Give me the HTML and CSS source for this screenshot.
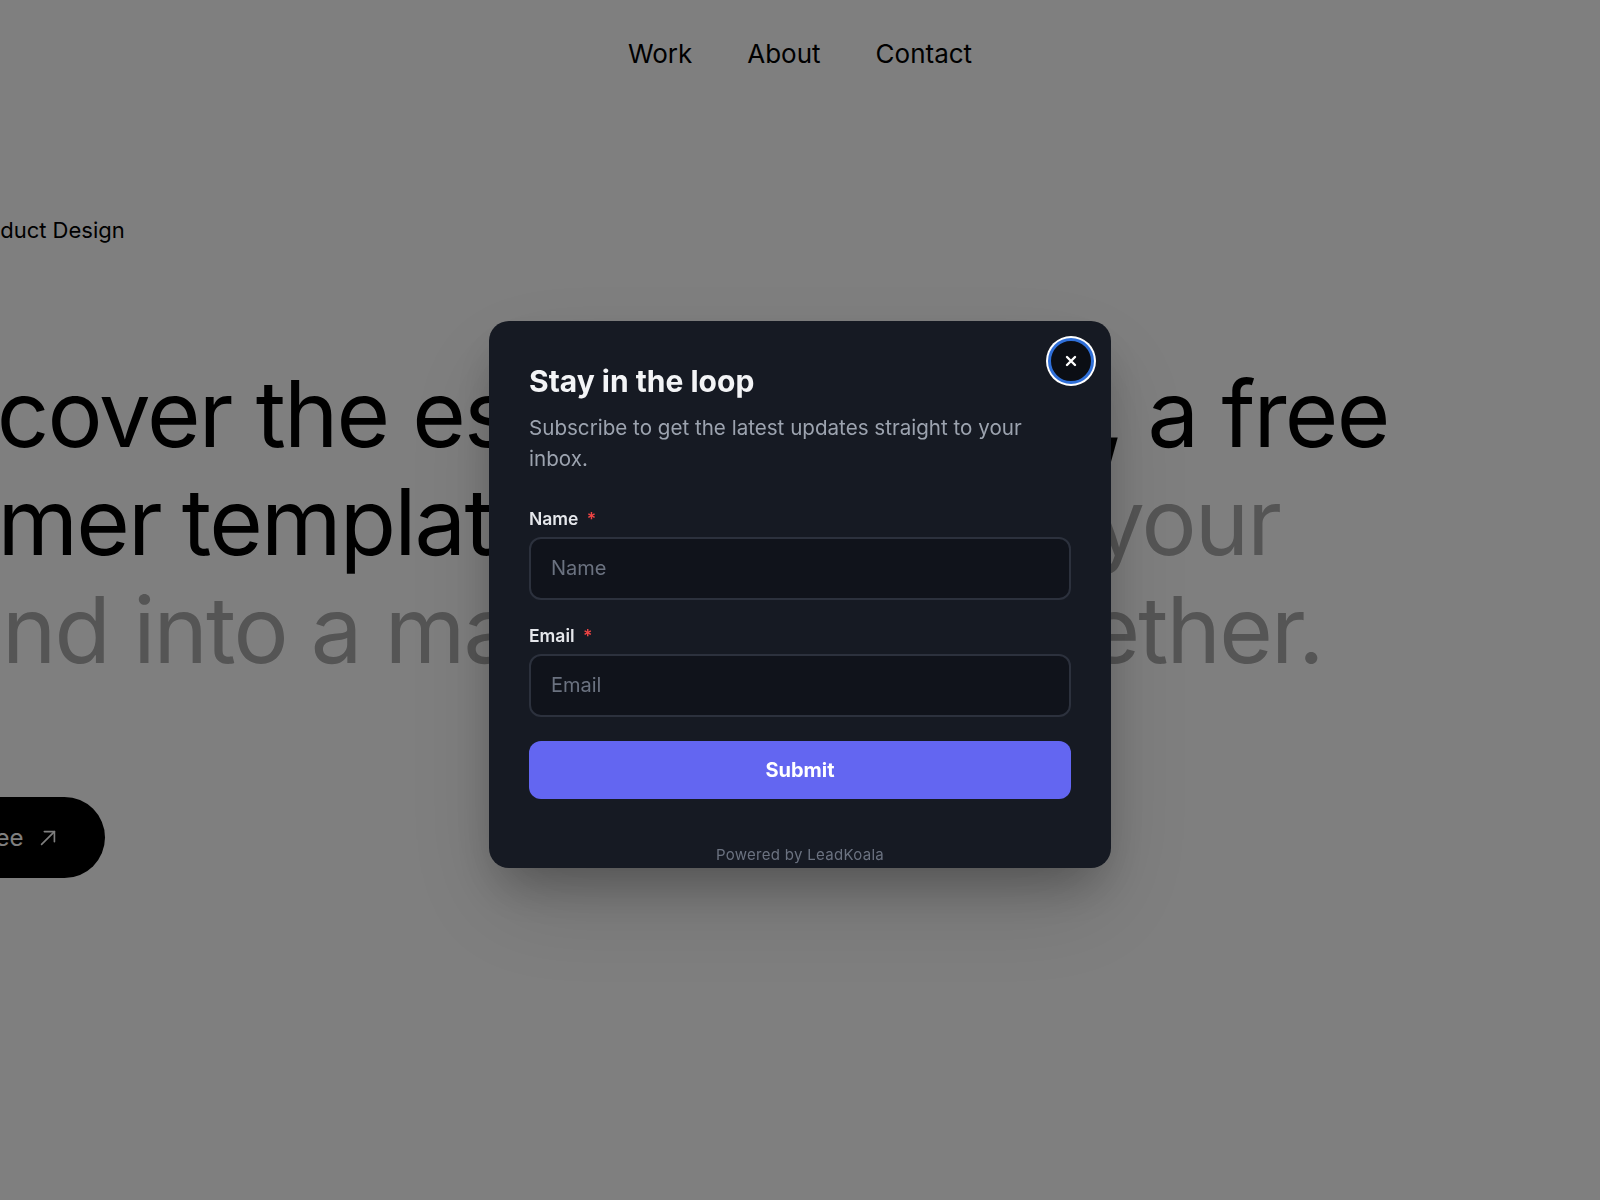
FILE: index.html
```html
<!DOCTYPE html>
<html lang="en">
<head>
    <meta charset="UTF-8">
    <title>Luxe — Framer Template</title>
    <link rel="stylesheet" href="styles.css">
</head>
<body>
<div class="page">
    <nav class="top-nav">
        <a href="#">Work</a>
        <a href="#">About</a>
        <a href="#">Contact</a>
    </nav>

    <section class="hero">
        <p class="hero-tag">Product Design</p>
        <h1 class="hero-title">
            <span class="line">Discover the essence of Luxe, a free</span>
            <span class="line tight">Framer template to transform <span class="dim">your</span></span>
            <span class="line dim">brand into a masterpiece, together.</span>
        </h1>
        <a class="hero-cta" href="#">
            Get it free
            <svg width="22" height="22" viewBox="0 0 24 24" fill="none" stroke="currentColor" stroke-width="1.8" stroke-linecap="round" stroke-linejoin="round">
                <path d="M5 19L19 5"/>
                <path d="M8 5h11v11"/>
            </svg>
        </a>
    </section>
</div>

<!-- Newsletter popup -->
<div class="overlay">
    <div class="popup">
        <button class="close-btn" type="button" aria-label="Close">
            <svg width="12" height="12" viewBox="0 0 12 12" fill="none" stroke="#fff" stroke-width="2.4" stroke-linecap="round">
                <path d="M2 2l8 8M10 2l-8 8"/>
            </svg>
        </button>

        <h2 class="popup-title">Stay in the loop</h2>
        <p class="popup-sub">Subscribe to get the latest updates straight to your inbox.</p>

        <form class="popup-form" onsubmit="return false;">
            <div class="field">
                <label for="leadName">Name <span class="req">*</span></label>
                <input type="text" id="leadName" placeholder="Name">
            </div>
            <div class="field">
                <label for="leadEmail">Email <span class="req">*</span></label>
                <input type="email" id="leadEmail" placeholder="Email">
            </div>
            <button class="submit-btn" type="submit">Submit</button>
        </form>

        <p class="powered">Powered by LeadKoala</p>
    </div>
</div>
</body>
</html>
```

FILE: styles.css
```css
* {
    box-sizing: border-box;
}
body {
    margin: 0;
    background-color: #fff;
    color: #000;
    font-family: 'Inter', 'Liberation Sans', sans-serif;
    overflow: hidden;
}
.page {
    height: 1200px;
}

/* Top navigation */
.top-nav {
    display: flex;
    justify-content: center;
    gap: 55px;
    padding-top: 39px;
}
.top-nav a {
    color: #000;
    text-decoration: none;
    font-size: 26px;
    line-height: 30px;
}

/* Hero */
.hero {
    margin-left: -135px;
}
.hero-tag {
    margin: 148px 0 0 100px;
    font-size: 22px;
    line-height: 26px;
}
.hero-title {
    margin: 117px 0 0;
    font-size: 92px;
    font-weight: 400;
    line-height: 108px;
    letter-spacing: -0.02em;
}
.hero-title .line {
    display: block;
    white-space: nowrap;
}
.hero-title .tight {
    word-spacing: -3px;
}
.dim {
    color: #aaa;
}
.hero-cta {
    display: inline-flex;
    align-items: center;
    gap: 14px;
    height: 81px;
    margin-top: 113px;
    padding: 0 46px;
    border-radius: 41px;
    background-color: #000;
    color: #fff;
    font-size: 24px;
    text-decoration: none;
}

/* Popup */
.overlay {
    position: fixed;
    inset: 0;
    display: flex;
    align-items: center;
    justify-content: center;
    padding-bottom: 12px;
    background-color: rgba(0,0,0,0.5);
}
.popup {
    position: relative;
    width: 622px;
    padding: 42px 40px 3px;
    background-color: #161a23;
    border-radius: 20px;
    box-shadow: 0 25px 50px -12px rgba(0,0,0,0.3), 0 40px 100px rgba(0,0,0,0.12);
}
.close-btn {
    position: absolute;
    top: 17px;
    right: 17px;
    width: 46px;
    height: 46px;
    display: flex;
    align-items: center;
    justify-content: center;
    padding: 0;
    background-color: #0b0e14;
    border: 3px solid #2f6fd8;
    border-radius: 50%;
    box-shadow: 0 0 0 2px #fff;
    cursor: pointer;
}
.popup-title {
    margin: 0;
    color: #f3f4f6;
    font-size: 30px;
    line-height: 36px;
    font-weight: 700;
}
.popup-sub {
    margin: 13px 0 0;
    color: #9ca3af;
    font-size: 20.6px;
    line-height: 31px;
}
.popup-form {
    margin-top: 33px;
}
.field {
    margin-bottom: 24px;
}
.field label {
    display: block;
    margin-bottom: 6px;
    color: #e5e7eb;
    font-size: 17.5px;
    line-height: 24px;
    font-weight: 600;
}
.req {
    color: #ef4444;
    margin-left: 4px;
}
.field input {
    display: block;
    width: 100%;
    height: 63px;
    padding: 0 20px;
    background-color: #10131b;
    border: 2px solid #2c313d;
    border-radius: 12px;
    color: #f3f4f6;
    font-family: inherit;
    font-size: 20px;
    outline: none;
}
.field input::placeholder {
    color: #6b7280;
}
.submit-btn {
    display: block;
    width: 100%;
    height: 58px;
    background-color: #6366f1;
    border: none;
    border-radius: 12px;
    color: #fff;
    font-family: inherit;
    font-size: 20px;
    font-weight: 700;
    cursor: pointer;
}
.powered {
    margin: 46px 0 0;
    text-align: center;
    color: #6b7280;
    font-size: 15px;
    line-height: 20px;
    letter-spacing: 0.02em;
}
```
